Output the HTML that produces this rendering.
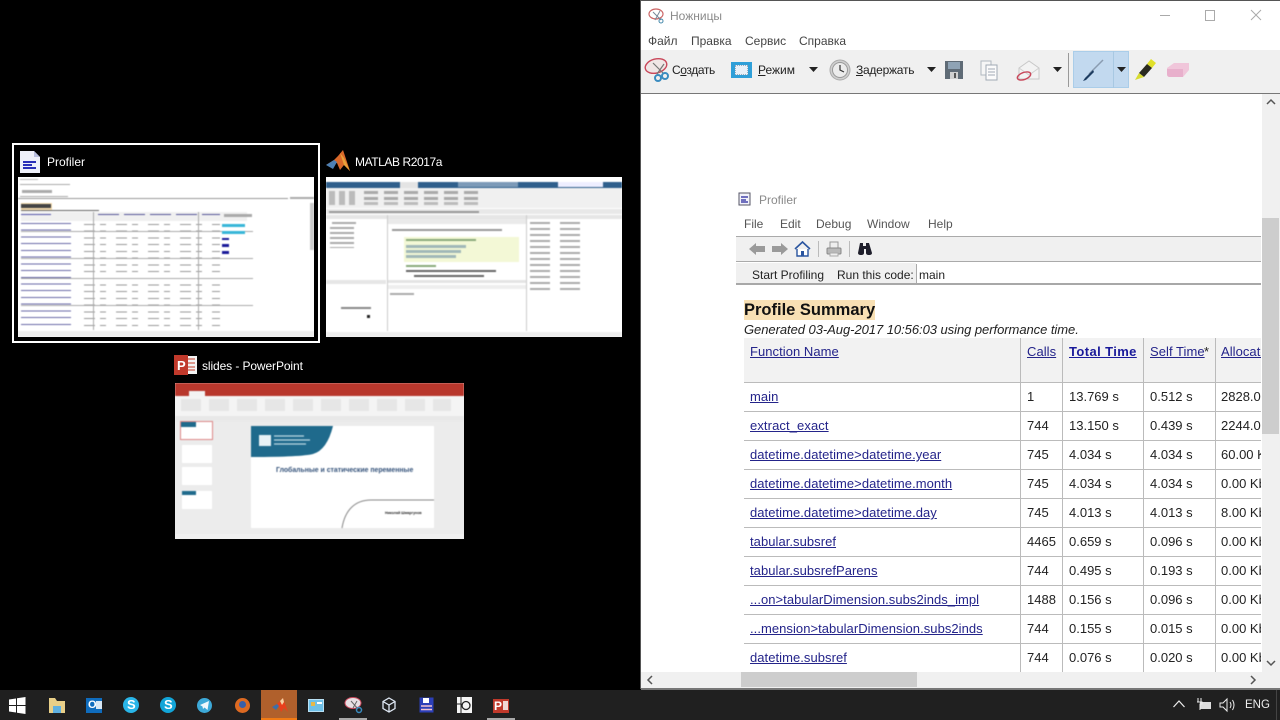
<!DOCTYPE html>
<html><head><meta charset="utf-8"><style>
html,body{margin:0;padding:0;width:1280px;height:720px;overflow:hidden;background:#000}
body{position:relative;font-family:"Liberation Sans",sans-serif}
.a,.t,.b{position:absolute}
.t{white-space:nowrap;line-height:16px}
.seg{font-size:12px;color:#222}
.g{font-size:12px;color:#444}
.w{font-size:12px;color:#fff;letter-spacing:-.1px}
.u{font-size:13px;color:#24248a;text-decoration:underline;margin-top:1px;letter-spacing:.05px}
.c{font-size:13px;color:#222;margin-top:1px}
.bl{position:absolute;left:0;top:0;width:100%;height:100%;filter:blur(.55px)}
svg{position:absolute;overflow:visible}
</style></head><body>

<!-- switcher frames -->
<div class="a" style="left:12px;top:143px;width:304px;height:196px;border:2px solid #fff"></div>
<svg style="left:19px;top:150px" width="22" height="24"><path d="M1 1h14l6 6v16H1z" fill="#eef0fa"/><path d="M15 1l6 6h-6z" fill="#b9bfe0"/><path d="M4 12h13M4 15h9M4 18h13" stroke="#2a2fb8" stroke-width="2"/></svg>
<div class="t w" style="left:47px;top:154px;letter-spacing:0">Profiler</div>
<svg style="left:326px;top:150px" width="24" height="22"><path d="M0 15l8-5 4-4 5-6 7 21-6-6-4 5-3-7z" fill="#d9682a"/><path d="M0 15l8-5 3 2-4 7z" fill="#4d80b4"/><path d="M14 3l4 5 6 13-6-6z" fill="#e8a13a"/></svg>
<div class="t w" style="left:355px;top:154px;letter-spacing:-.42px">MATLAB R2017a</div>
<svg style="left:174px;top:354px" width="23" height="22"><rect x="8" y="2" width="15" height="18" fill="#f3f3f3"/><path d="M14 5h7M14 9h7M14 13h7M14 16h7" stroke="#c43e2a"/><rect x="0" y="1" width="14" height="20" fill="#c0392b"/><text x="3" y="16" font-size="13" font-weight="bold" fill="#fff" font-family="Liberation Sans">P</text></svg>
<div class="t w" style="left:202px;top:358px">slides - PowerPoint</div>

<!-- Profiler thumbnail -->
<div class="a" style="left:18px;top:177px;width:296px;height:160px;background:#fff;overflow:hidden"><div class="bl">
 <div class="a" style="left:2px;top:2px;width:18px;height:1px;background:#bbb"></div>
 <div class="a" style="left:2px;top:7px;width:50px;height:1px;background:#aaa"></div>
 <div class="a" style="left:4px;top:13px;width:30px;height:3px;background:#aaa"></div>
 <div class="a" style="left:2px;top:19px;width:48px;height:1px;background:#aaa"></div>
 <div class="a" style="left:0;top:21px;width:270px;height:1px;background:#999"></div>
 <div class="a" style="left:272px;top:20px;width:24px;height:2px;background:#aaa"></div>
 <div class="a" style="left:3px;top:26px;width:31px;height:7px;background:#f6dcae"></div>
 <div class="a" style="left:3px;top:27px;width:30px;height:4px;background:#444"></div>
 <div class="a" style="left:3px;top:33px;width:78px;height:1px;background:#666"></div>
 <div class="a" style="left:3px;top:35px;width:226px;height:9px;background:#f0f0f0"></div>
 <div class="a" style="left:3px;top:37px;width:30px;height:1px;background:#55a"></div>
 <div class="a" style="left:80px;top:37px;width:122px;height:1px;background:repeating-linear-gradient(90deg,#559 0 21px,transparent 21px 26px)"></div>
 <div class="a" style="left:206px;top:37px;width:28px;height:3px;background:#aaa"></div>
 <div class="a" style="left:3px;top:46px;width:54px;height:107px;background:repeating-linear-gradient(180deg,#6a6aa8 0 1px,transparent 1px 6.72px);-webkit-mask:linear-gradient(90deg,#000 0 50px,transparent 50px);mask:linear-gradient(90deg,#000 0 50px,transparent 50px)"></div>
 <div class="a" style="left:66px;top:47px;width:136px;height:106px;background:repeating-linear-gradient(180deg,#999 0 1px,transparent 1px 6.72px);-webkit-mask:repeating-linear-gradient(90deg,#000 0 11px,transparent 11px 16px,#000 16px 22px,transparent 22px 32px);mask:repeating-linear-gradient(90deg,#000 0 11px,transparent 11px 16px,#000 16px 22px,transparent 22px 32px)"></div>
 <div class="a" style="left:3px;top:54px;width:232px;height:1px;background:#aaa"></div>
 <div class="a" style="left:3px;top:81px;width:232px;height:1px;background:#aaa"></div>
 <div class="a" style="left:3px;top:101px;width:232px;height:1px;background:#aaa"></div>
 <div class="a" style="left:3px;top:128px;width:232px;height:1px;background:#aaa"></div>
 <div class="a" style="left:204px;top:47px;width:23px;height:3px;background:#38b6d8"></div>
 <div class="a" style="left:204px;top:54px;width:23px;height:3px;background:#38b6d8"></div>
 <div class="a" style="left:204px;top:61px;width:7px;height:2px;background:#1a1a9a"></div>
 <div class="a" style="left:204px;top:67px;width:7px;height:3px;background:#1a1a9a"></div>
 <div class="a" style="left:204px;top:74px;width:7px;height:3px;background:#1a1a9a"></div>
 <div class="a" style="left:292px;top:26px;width:4px;height:47px;background:#ccc"></div>
 <div class="a" style="left:0;top:154px;width:296px;height:6px;background:#eee"></div>
 <div class="a" style="left:75px;top:35px;width:1px;height:118px;background:#aaa"></div>
 <div class="a" style="left:180px;top:35px;width:1px;height:118px;background:#aaa"></div>
</div></div>

<!-- MATLAB thumbnail -->
<div class="a" style="left:326px;top:177px;width:296px;height:160px;background:#fff;overflow:hidden"><div class="bl">
 <div class="a" style="left:0;top:5px;width:296px;height:6px;background:#2f5f8c"></div>
 <div class="a" style="left:74px;top:5px;width:18px;height:6px;background:#e4e4e4"></div>
 <div class="a" style="left:132px;top:5px;width:60px;height:5px;background:#7c9ab8"></div>
 <div class="a" style="left:232px;top:5px;width:45px;height:5px;background:#eef"></div>
 <div class="a" style="left:0;top:11px;width:296px;height:20px;background:#f0f0f0"></div>
 <div class="a" style="left:3px;top:14px;width:30px;height:14px;background:repeating-linear-gradient(90deg,#bbb 0 6px,#f0f0f0 6px 10px)"></div>
 <div class="a" style="left:38px;top:14px;width:120px;height:3px;background:repeating-linear-gradient(90deg,#aaa 0 14px,#f0f0f0 14px 20px)"></div>
 <div class="a" style="left:38px;top:20px;width:120px;height:3px;background:repeating-linear-gradient(90deg,#aaa 0 14px,#f0f0f0 14px 20px)"></div>
 <div class="a" style="left:38px;top:25px;width:120px;height:3px;background:repeating-linear-gradient(90deg,#bbb 0 14px,#f0f0f0 14px 20px)"></div>
 <div class="a" style="left:0;top:32px;width:296px;height:5px;background:#e8e8e8"></div>
 <div class="a" style="left:3px;top:34px;width:150px;height:2px;background:#999"></div>
 <div class="a" style="left:0;top:38px;width:296px;height:4px;background:#e6e6e6"></div>
 <div class="a" style="left:6px;top:45px;width:24px;height:2px;background:#aaa"></div>
 <div class="a" style="left:4px;top:50px;width:24px;height:21px;background:repeating-linear-gradient(180deg,#aaa 0 2px,transparent 2px 5px)"></div>
 <div class="a" style="left:0;top:103px;width:60px;height:4px;background:#e6e6e6"></div>
 <div class="a" style="left:15px;top:130px;width:30px;height:2px;background:#888"></div>
 <div class="a" style="left:41px;top:138px;width:3px;height:3px;background:#222"></div>
 <div class="a" style="left:61px;top:38px;width:1px;height:116px;background:#ccc"></div>
 <div class="a" style="left:200px;top:38px;width:1px;height:116px;background:#ccc"></div>
 <div class="a" style="left:62px;top:42px;width:138px;height:5px;background:#eaeaea"></div>
 <div class="a" style="left:66px;top:52px;width:110px;height:2px;background:#999"></div>
 <div class="a" style="left:78px;top:60px;width:115px;height:25px;background:#f3f8d6"></div>
 <div class="a" style="left:80px;top:62px;width:70px;height:2px;background:#8aaa7a"></div>
 <div class="a" style="left:80px;top:68px;width:60px;height:3px;background:#a0b8b8"></div>
 <div class="a" style="left:80px;top:73px;width:55px;height:3px;background:#a0b8b8"></div>
 <div class="a" style="left:80px;top:78px;width:50px;height:3px;background:#a0b8b8"></div>
 <div class="a" style="left:80px;top:88px;width:30px;height:2px;background:#8aaa7a"></div>
 <div class="a" style="left:80px;top:93px;width:90px;height:2px;background:#666"></div>
 <div class="a" style="left:88px;top:98px;width:70px;height:2px;background:#666"></div>
 <div class="a" style="left:62px;top:103px;width:138px;height:3px;background:#e4e4e4"></div>
 <div class="a" style="left:62px;top:108px;width:138px;height:4px;background:#eee"></div>
 <div class="a" style="left:64px;top:116px;width:24px;height:2px;background:#aaa"></div>
 <div class="a" style="left:204px;top:45px;width:50px;height:72px;background:repeating-linear-gradient(180deg,#aaa 0 2px,transparent 2px 6px);-webkit-mask:linear-gradient(90deg,#000 0 20px,transparent 20px 30px,#000 30px);mask:linear-gradient(90deg,#000 0 20px,transparent 20px 30px,#000 30px)"></div>
 <div class="a" style="left:0;top:155px;width:296px;height:5px;background:#eee"></div>
</div></div>

<!-- PowerPoint thumbnail -->
<div class="a" style="left:175px;top:383px;width:289px;height:156px;background:#ececec;overflow:hidden"><div class="bl">
 <div class="a" style="left:0;top:0;width:289px;height:13px;background:#b8372c"></div>
 <div class="a" style="left:14px;top:8px;width:16px;height:5px;background:#f3f3f3"></div>
 <div class="a" style="left:0;top:13px;width:289px;height:20px;background:#f4f4f4"></div>
 <div class="a" style="left:6px;top:16px;width:270px;height:12px;background:repeating-linear-gradient(90deg,#e6e6e6 0 20px,#f4f4f4 20px 28px)"></div>
 <div class="a" style="left:0;top:33px;width:289px;height:5px;background:#e8e8e8"></div>
 <div class="a" style="left:5px;top:38px;width:33px;height:19px;background:#fff;border:1px solid #d88;box-sizing:border-box"></div>
 <div class="a" style="left:6px;top:39px;width:15px;height:5px;background:#1f6a8c"></div>
 <div class="a" style="left:7px;top:62px;width:30px;height:18px;background:#fff"></div>
 <div class="a" style="left:7px;top:84px;width:30px;height:18px;background:#fff"></div>
 <div class="a" style="left:7px;top:108px;width:30px;height:18px;background:#fff"></div>
 <div class="a" style="left:7px;top:108px;width:14px;height:4px;background:#1f6a8c"></div>
 <div class="a" style="left:76px;top:43px;width:183px;height:102px;background:#fff"></div>
 <svg style="left:76px;top:43px" width="183" height="102"><path d="M0 0H82Q76 24 62 28 50 31 0 31z" fill="#1f6a8c"/><rect x="8" y="9" width="12" height="11" fill="#e8f2f6"/><path d="M23 10h30M23 14h36M23 18h32" stroke="#bcd8e3" stroke-width="1.300"/><path d="M91 102C94 84 104 74 120 74H183" fill="none" stroke="#888" stroke-width="1"/></svg>
 <div class="t" style="left:101px;top:83px;font-size:6.900px;font-weight:bold;color:#34527a;line-height:10px">Глобальные и статические переменные</div>
 <div class="t" style="left:210px;top:126px;font-size:3.600px;font-weight:bold;color:#222;line-height:8px">Николай Шмаргунов</div>
 <div class="a" style="left:0;top:151px;width:289px;height:5px;background:#f0f0f0"></div>
</div></div>

<!-- Snipping tool window -->
<div class="a" style="left:641px;top:0;width:639px;height:688px;background:#fff"></div>
<div class="a" style="left:640px;top:0;width:1px;height:689px;background:#555"></div>
<div class="a" style="left:640px;top:0;width:640px;height:1px;background:#555"></div>
<div class="a" style="left:641px;top:688px;width:639px;height:2px;background:#777"></div>
<svg style="left:648px;top:8px" width="18" height="16"><ellipse cx="8" cy="6" rx="7" ry="5" fill="none" stroke="#c66" stroke-width="1.200"/><path d="M5 4l8 8M12 3l-5 9" stroke="#789"/><circle cx="13" cy="13" r="2" fill="none" stroke="#48a"/></svg>
<div class="t g" style="left:670px;top:8px;color:#8a8a8a">Ножницы</div>
<div class="a" style="left:1160px;top:15px;width:10px;height:1px;background:#aaa"></div>
<div class="a" style="left:1205px;top:10px;width:8px;height:9px;border:1px solid #aaa"></div>
<svg style="left:1250px;top:9px" width="12" height="12"><path d="M1 1l10 10M11 1L1 11" stroke="#aaa" stroke-width="1"/></svg>
<div class="t g" style="left:648px;top:33px">Файл</div>
<div class="t g" style="left:691px;top:33px">Правка</div>
<div class="t g" style="left:745px;top:33px">Сервис</div>
<div class="t g" style="left:799px;top:33px">Справка</div>
<div class="a" style="left:641px;top:50px;width:639px;height:43px;background:#f0f0f0"></div>
<div class="a" style="left:641px;top:93px;width:639px;height:1px;background:#777"></div>

<svg style="left:644px;top:57px" width="26" height="25"><ellipse cx="12" cy="9" rx="11" ry="7" transform="rotate(-15 12 9)" fill="#f0e6e6" stroke="#c9485b" stroke-width="1.400"/><path d="M9 6l10 10M20 7L13 17" stroke="#777" stroke-width="1.200"/><circle cx="21" cy="19" r="3" fill="none" stroke="#3a8cc0" stroke-width="2"/><circle cx="14" cy="21" r="3" fill="none" stroke="#3a8cc0" stroke-width="2"/></svg>
<div class="t seg" style="left:672px;top:62px;letter-spacing:-.4px">С<u>о</u>здать</div>
<div class="a" style="left:731px;top:62px;width:21px;height:16px;background:#2f9fd8"></div>
<div class="a" style="left:735px;top:65px;width:13px;height:10px;background:#e8f0f8;box-sizing:border-box;border:1px dotted #9ab"></div>
<div class="t seg" style="left:758px;top:62px"><u>Р</u>ежим</div>
<svg style="left:809px;top:67px" width="9" height="6"><path d="M0 0h9L4.500 5z" fill="#222"/></svg>
<svg style="left:829px;top:59px" width="22" height="22"><circle cx="11" cy="11" r="10" fill="#cfcfcf" stroke="#aaa"/><circle cx="11" cy="11" r="7.500" fill="#ececec" stroke="#999"/><path d="M11 6v5l4 2" fill="none" stroke="#333" stroke-width="1.200"/></svg>
<div class="t seg" style="left:856px;top:62px;letter-spacing:-.25px"><u>З</u>адержать</div>
<svg style="left:927px;top:67px" width="9" height="6"><path d="M0 0h9L4.500 5z" fill="#222"/></svg>
<svg style="left:945px;top:60px" width="18" height="20"><path d="M0 1h18v18H0z" fill="#5f6b76"/><rect x="3" y="2" width="12" height="7" fill="#8fa3b5"/><rect x="5" y="12" width="8" height="7" fill="#d0d0d0"/><rect x="9" y="13" width="2" height="5" fill="#555"/></svg>
<svg style="left:980px;top:60px" width="19" height="20"><path d="M1 1h10v14H1z" fill="#f6f6f6" stroke="#b0b8c0"/><path d="M6 5h11v15H6z" fill="#fbfbfb" stroke="#a0aab4"/><path d="M8 9h7M8 12h7M8 15h7" stroke="#a0aab4"/></svg>
<svg style="left:1016px;top:60px" width="24" height="22"><path d="M3 8L13 1l10 7v11H3z" fill="#f3f3f3" stroke="#c8c8c8"/><path d="M3 8l10 7 10-7" fill="none" stroke="#d0d0d0"/><ellipse cx="8" cy="16" rx="7" ry="3.500" transform="rotate(-20 8 16)" fill="none" stroke="#c9485b" stroke-width="1.400"/></svg>
<svg style="left:1053px;top:67px" width="9" height="6"><path d="M0 0h9L4.500 5z" fill="#222"/></svg>
<div class="a" style="left:1068px;top:53px;width:1px;height:34px;background:#999"></div>
<div class="a" style="left:1073px;top:51px;width:56px;height:37px;background:#c2d9ef;border:1px solid #aacde9;box-sizing:border-box"></div>
<div class="a" style="left:1113px;top:51px;width:1px;height:37px;background:#a8c8e2"></div>
<svg style="left:1081px;top:59px" width="24" height="24"><path d="M22 1L8 15" stroke="#8a9cb0" stroke-width="1.500"/><path d="M12 11L4 19l-2 3 3-1 8-8z" fill="#1d3c60"/></svg>
<svg style="left:1117px;top:67px" width="9" height="6"><path d="M0 0h9L4.500 5z" fill="#222"/></svg>
<svg style="left:1134px;top:58px" width="23" height="23"><path d="M17 1l5 4-4 5-5-4z" fill="#e0e02a"/><path d="M13 6l5 4-8 9-5-4z" fill="#2a2a20"/><path d="M5 15l5 4-9 3z" fill="#d8dc30"/></svg>
<svg style="left:1166px;top:62px" width="24" height="16"><path d="M1 6l7-5h15v7l-6 7H4q-3 0-3-3z" fill="#f0c6da"/><path d="M1 7h16v8H4q-3 0-3-3z" fill="#e8b0cc"/></svg>

<!-- Profiler content -->
<svg style="left:738px;top:192px" width="14" height="14"><rect x="1" y="1" width="11" height="12" fill="#f2f2fa" stroke="#556"/><path d="M3 5h7M3 8h5M3 10h7" stroke="#22229a" stroke-width="1.200"/></svg>
<div class="t g" style="left:759px;top:192px;color:#8a8a8a">Profiler</div>
<div class="t g" style="left:744px;top:216px;color:#555">File</div>
<div class="t g" style="left:780px;top:216px;color:#555">Edit</div>
<div class="t g" style="left:816px;top:216px;color:#555">Debug</div>
<div class="t g" style="left:867px;top:216px;color:#555">Window</div>
<div class="t g" style="left:928px;top:216px;color:#555">Help</div>
<div class="a" style="left:736px;top:236px;width:525px;height:26px;background:#f0f0f0;border-top:1px solid #aaa;border-bottom:1px solid #aaa;box-sizing:border-box"></div>
<div class="a" style="left:736px;top:263px;width:525px;height:22px;background:#fff;border-bottom:2px solid #a8a8a8;box-sizing:border-box"></div>
<div class="a" style="left:736px;top:263px;width:180px;height:20px;background:#f0f0f0"></div>
<svg style="left:749px;top:242px" width="17" height="14"><path d="M0 7l7-6v3h9v6H7v3z" fill="#9a9a9a"/></svg>
<svg style="left:771px;top:242px" width="17" height="14"><path d="M17 7l-7-6v3H1v6h9v3z" fill="#9a9a9a"/></svg>
<svg style="left:794px;top:241px" width="17" height="16"><path d="M1 8l7.500-7L16 8" fill="none" stroke="#2a55a0" stroke-width="1.600"/><path d="M3 8v7h11V8" fill="#fff" stroke="#2a55a0" stroke-width="1.400"/><rect x="7" y="10" width="3" height="5" fill="#2a55a0"/></svg>
<div class="a" style="left:818px;top:241px;width:1px;height:16px;background:#bbb"></div>
<svg style="left:826px;top:241px" width="16" height="16"><rect x="4" y="1" width="8" height="6" fill="#eee" stroke="#999"/><rect x="1" y="7" width="14" height="6" rx="1" fill="#b8b8b8" stroke="#888"/><rect x="4" y="12" width="8" height="3" fill="#eee" stroke="#aaa"/></svg>
<div class="a" style="left:849px;top:241px;width:1px;height:16px;background:#bbb"></div>
<svg style="left:857px;top:242px" width="16" height="14"><path d="M3 1h3v3h3V1h3l3 10q0 2-3 2t-3-2V7H7v4q0 2-3 2T1 11z" fill="#1f1f2c"/></svg>
<div class="t seg" style="left:752px;top:267px">Start Profiling</div>
<div class="t seg" style="left:837px;top:267px">Run this code:</div>
<div class="a" style="left:916px;top:264px;width:1px;height:20px;background:#aaa"></div>
<div class="t seg" style="left:919px;top:267px">main</div>

<div class="a" style="left:744px;top:300px;width:131px;height:20px;background:#f8e0b4"></div>
<div class="t" style="left:744px;top:300px;font-size:16.500px;font-weight:bold;color:#111;line-height:20px">Profile Summary</div>
<div class="t" style="left:744px;top:322px;font-size:13px;font-style:italic;color:#222;letter-spacing:-.05px">Generated 03-Aug-2017 10:56:03 using performance time.</div>

<div class="a" style="left:744px;top:338px;width:517px;height:44px;background:#f2f2f2"></div>
<div class="a" style="left:744px;top:382px;width:517px;height:1px;background:#bbb"></div>
<div class="a" style="left:744px;top:411px;width:517px;height:1px;background:#bbb"></div>
<div class="a" style="left:744px;top:440px;width:517px;height:1px;background:#bbb"></div>
<div class="a" style="left:744px;top:469px;width:517px;height:1px;background:#bbb"></div>
<div class="a" style="left:744px;top:498px;width:517px;height:1px;background:#bbb"></div>
<div class="a" style="left:744px;top:527px;width:517px;height:1px;background:#bbb"></div>
<div class="a" style="left:744px;top:556px;width:517px;height:1px;background:#bbb"></div>
<div class="a" style="left:744px;top:585px;width:517px;height:1px;background:#bbb"></div>
<div class="a" style="left:744px;top:614px;width:517px;height:1px;background:#bbb"></div>
<div class="a" style="left:744px;top:643px;width:517px;height:1px;background:#bbb"></div>
<div class="a" style="left:1020px;top:338px;width:1px;height:334px;background:#bbb"></div>
<div class="a" style="left:1062px;top:338px;width:1px;height:334px;background:#bbb"></div>
<div class="a" style="left:1143px;top:338px;width:1px;height:334px;background:#bbb"></div>
<div class="a" style="left:1215px;top:338px;width:1px;height:334px;background:#bbb"></div>

<div class="t u" style="left:750px;top:343px">Function Name</div>
<div class="t u" style="left:1027px;top:343px">Calls</div>
<div class="t u" style="left:1069px;top:343px;font-weight:bold;letter-spacing:.4px;color:#1a1a9a">Total Time</div>
<div class="t u" style="left:1150px;top:343px">Self Time</div><div class="t c" style="left:1204px;top:343px">*</div>
<div class="a" style="left:1221px;top:343px;width:40px;height:18px;overflow:hidden"><div class="t u" style="left:0;top:0">Allocated Memory</div></div>

<div class="t u" style="left:750px;top:388px">main</div><div class="t c" style="left:1027px;top:388px">1</div><div class="t c" style="left:1069px;top:388px">13.769 s</div><div class="t c" style="left:1150px;top:388px">0.512 s</div>
<div class="t u" style="left:750px;top:417px;letter-spacing:.1px">extract_exact</div><div class="t c" style="left:1027px;top:417px">744</div><div class="t c" style="left:1069px;top:417px">13.150 s</div><div class="t c" style="left:1150px;top:417px">0.439 s</div>
<div class="t u" style="left:750px;top:446px">datetime.datetime&gt;datetime.year</div><div class="t c" style="left:1027px;top:446px">745</div><div class="t c" style="left:1069px;top:446px">4.034 s</div><div class="t c" style="left:1150px;top:446px">4.034 s</div>
<div class="t u" style="left:750px;top:475px">datetime.datetime&gt;datetime.month</div><div class="t c" style="left:1027px;top:475px">745</div><div class="t c" style="left:1069px;top:475px">4.034 s</div><div class="t c" style="left:1150px;top:475px">4.034 s</div>
<div class="t u" style="left:750px;top:504px">datetime.datetime&gt;datetime.day</div><div class="t c" style="left:1027px;top:504px">745</div><div class="t c" style="left:1069px;top:504px">4.013 s</div><div class="t c" style="left:1150px;top:504px">4.013 s</div>
<div class="t u" style="left:750px;top:533px">tabular.subsref</div><div class="t c" style="left:1027px;top:533px">4465</div><div class="t c" style="left:1069px;top:533px">0.659 s</div><div class="t c" style="left:1150px;top:533px">0.096 s</div>
<div class="t u" style="left:750px;top:562px">tabular.subsrefParens</div><div class="t c" style="left:1027px;top:562px">744</div><div class="t c" style="left:1069px;top:562px">0.495 s</div><div class="t c" style="left:1150px;top:562px">0.193 s</div>
<div class="t u" style="left:750px;top:591px">...on&gt;tabularDimension.subs2inds_impl</div><div class="t c" style="left:1027px;top:591px">1488</div><div class="t c" style="left:1069px;top:591px">0.156 s</div><div class="t c" style="left:1150px;top:591px">0.096 s</div>
<div class="t u" style="left:750px;top:620px">...mension&gt;tabularDimension.subs2inds</div><div class="t c" style="left:1027px;top:620px">744</div><div class="t c" style="left:1069px;top:620px">0.155 s</div><div class="t c" style="left:1150px;top:620px">0.015 s</div>
<div class="t u" style="left:750px;top:649px">datetime.subsref</div><div class="t c" style="left:1027px;top:649px">744</div><div class="t c" style="left:1069px;top:649px">0.076 s</div><div class="t c" style="left:1150px;top:649px">0.020 s</div>

<div class="a" style="left:1221px;top:388px;width:40px;height:280px;overflow:hidden">
 <div class="t c" style="left:0;top:0">2828.00 Kb</div>
 <div class="t c" style="left:0;top:29px">2244.00 Kb</div>
 <div class="t c" style="left:0;top:58px">60.00 Kb</div>
 <div class="t c" style="left:0;top:87px">0.00 Kb</div>
 <div class="t c" style="left:0;top:116px">8.00 Kb</div>
 <div class="t c" style="left:0;top:145px">0.00 Kb</div>
 <div class="t c" style="left:0;top:174px">0.00 Kb</div>
 <div class="t c" style="left:0;top:203px">0.00 Kb</div>
 <div class="t c" style="left:0;top:232px">0.00 Kb</div>
 <div class="t c" style="left:0;top:261px">0.00 Kb</div>
</div>

<!-- scrollbars -->
<div class="a" style="left:1262px;top:94px;width:18px;height:578px;background:#f0f0f0"></div>
<div class="a" style="left:1262px;top:218px;width:17px;height:216px;background:#cdcdcd"></div>
<svg style="left:1266px;top:99px" width="10" height="6"><path d="M1 5l4-4 4 4" fill="none" stroke="#555" stroke-width="1.500"/></svg>
<svg style="left:1266px;top:660px" width="10" height="6"><path d="M1 1l4 4 4-4" fill="none" stroke="#555" stroke-width="1.500"/></svg>
<div class="a" style="left:641px;top:672px;width:639px;height:16px;background:#f0f0f0"></div>
<div class="a" style="left:741px;top:672px;width:176px;height:15px;background:#cdcdcd"></div>
<svg style="left:647px;top:675px" width="6" height="10"><path d="M5 1L1 5l4 4" fill="none" stroke="#555" stroke-width="1.500"/></svg>
<svg style="left:1250px;top:675px" width="6" height="10"><path d="M1 1l4 4-4 4" fill="none" stroke="#555" stroke-width="1.500"/></svg>

<!-- Taskbar -->
<div class="a" style="left:0;top:690px;width:1280px;height:30px;background:#202020"></div>
<svg style="left:9px;top:697px" width="17" height="17"><path d="M0 2.500l7-1V8H0zM8 1.300L16.500 0v8H8zM0 9h7v6.500l-7-1zM8 9h8.500v8L8 15.700z" fill="#fff"/></svg>
<svg style="left:49px;top:698px" width="16" height="15"><path d="M0 0h6l2 3h8v12H0z" fill="#e8cf88"/><rect x="4" y="8" width="8" height="7" fill="#5fb0e0"/></svg>
<div class="a" style="left:86px;top:698px;width:16px;height:15px;background:#0f6cbd"></div>
<div class="t" style="left:88px;top:697px;font-size:11px;font-weight:bold;color:#fff">O</div>
<div class="a" style="left:96px;top:701px;width:6px;height:8px;background:#d8e8f5"></div>
<div class="a" style="left:123px;top:697px;width:16px;height:16px;border-radius:50%;background:#29b5e8"></div>
<div class="t" style="left:127px;top:697px;font-size:13px;font-weight:bold;color:#fff">S</div>
<div class="a" style="left:160px;top:697px;width:16px;height:16px;border-radius:50%;background:#12a5d8"></div>
<div class="t" style="left:164px;top:697px;font-size:13px;font-weight:bold;color:#fff">S</div>
<div class="a" style="left:197px;top:698px;width:15px;height:15px;border-radius:50%;background:#3da9d8"></div>
<svg style="left:200px;top:701px" width="10" height="9"><path d="M0 4l9-4-1.500 9-3-2.500L3 8 2.500 5.500z" fill="#f0f8fc"/></svg>
<div class="a" style="left:235px;top:698px;width:15px;height:15px;border-radius:50%;background:#dd6a22"></div>
<div class="a" style="left:239px;top:701px;width:7px;height:7px;border-radius:50%;background:#3a5fa8"></div>
<div class="a" style="left:261px;top:690px;width:36px;height:30px;background:#b0602c"></div>
<div class="a" style="left:261px;top:718px;width:36px;height:2px;background:#f07a14"></div>
<svg style="left:272px;top:698px" width="16" height="15"><path d="M0 9l5-3 3-3 3-3 5 14-4-4-3 4-2-5z" fill="#e8401c"/><path d="M0 9l5-3 2 2-3 4z" fill="#3d70a8"/><path d="M8 3l3-3 1 4-2 3z" fill="#f4d0a0"/></svg>
<div class="a" style="left:308px;top:699px;width:16px;height:13px;background:#6ec0e8;border:1px solid #b8e0f4;box-sizing:border-box"></div>
<div class="a" style="left:311px;top:702px;width:4px;height:4px;background:#e6b84a"></div>
<div class="a" style="left:317px;top:702px;width:5px;height:2px;background:#fff"></div>
<svg style="left:345px;top:697px" width="18" height="16"><ellipse cx="8" cy="6" rx="8" ry="5.500" fill="#e8e0e4" stroke="#c9485b"/><path d="M6 4l7 8M12 4l-4 7" stroke="#666"/><circle cx="14" cy="13" r="2.500" fill="none" stroke="#3a8cc0" stroke-width="1.500"/></svg>
<div class="a" style="left:339px;top:718px;width:28px;height:2px;background:#a8a8a8"></div>
<svg style="left:382px;top:697px" width="14" height="16"><path d="M7 1l6 3.500v7L7 15l-6-3.500v-7zM1 4.500L7 8l6-3.500M7 8v7" fill="none" stroke="#dfe8f4" stroke-width="1.300"/></svg>
<svg style="left:419px;top:697px" width="15" height="16"><rect x=".5" y=".5" width="14" height="15" fill="#2c3fb8"/><rect x="4" y="1" width="6" height="5" fill="#fff"/><path d="M2 9h11M2 12.500h11" stroke="#f2c2d0" stroke-width="1.500"/></svg>
<div class="a" style="left:457px;top:697px;width:15px;height:16px;background:#f4f4f4"></div>
<svg style="left:457px;top:697px" width="15" height="16"><circle cx="9" cy="8.500" r="4" fill="none" stroke="#222" stroke-width="1.300"/><path d="M4 0v16M0 7h4" stroke="#222"/></svg>
<div class="a" style="left:493px;top:699px;width:16px;height:14px;background:#c0392b"></div>
<div class="t" style="left:494px;top:698px;font-size:12px;font-weight:bold;color:#fff">P</div>
<div class="a" style="left:503px;top:701px;width:5px;height:9px;background:#f0d8d4"></div>
<div class="a" style="left:487px;top:718px;width:28px;height:2px;background:#a8a8a8"></div>

<svg style="left:1173px;top:700px" width="12" height="8"><path d="M.5 7l5.500-6 5.500 6" fill="none" stroke="#eee" stroke-width="1.200"/></svg>
<svg style="left:1196px;top:697px" width="16" height="14"><rect x="4" y="5" width="11" height="7" fill="#ddd"/><path d="M2 1v4M5 1v4M1 5h5v2H4v6" fill="none" stroke="#eee"/></svg>
<svg style="left:1219px;top:698px" width="17" height="14"><path d="M1 5h3l4-4v12L4 9H1z" fill="none" stroke="#eee"/><path d="M11 4q2 3 0 6M13.500 2q3 5 0 10" fill="none" stroke="#eee"/></svg>
<div class="t" style="left:1245px;top:697px;font-size:11.500px;color:#eee">ENG</div>
<div class="a" style="left:1276px;top:690px;width:1px;height:30px;background:#444"></div>
</body></html>
